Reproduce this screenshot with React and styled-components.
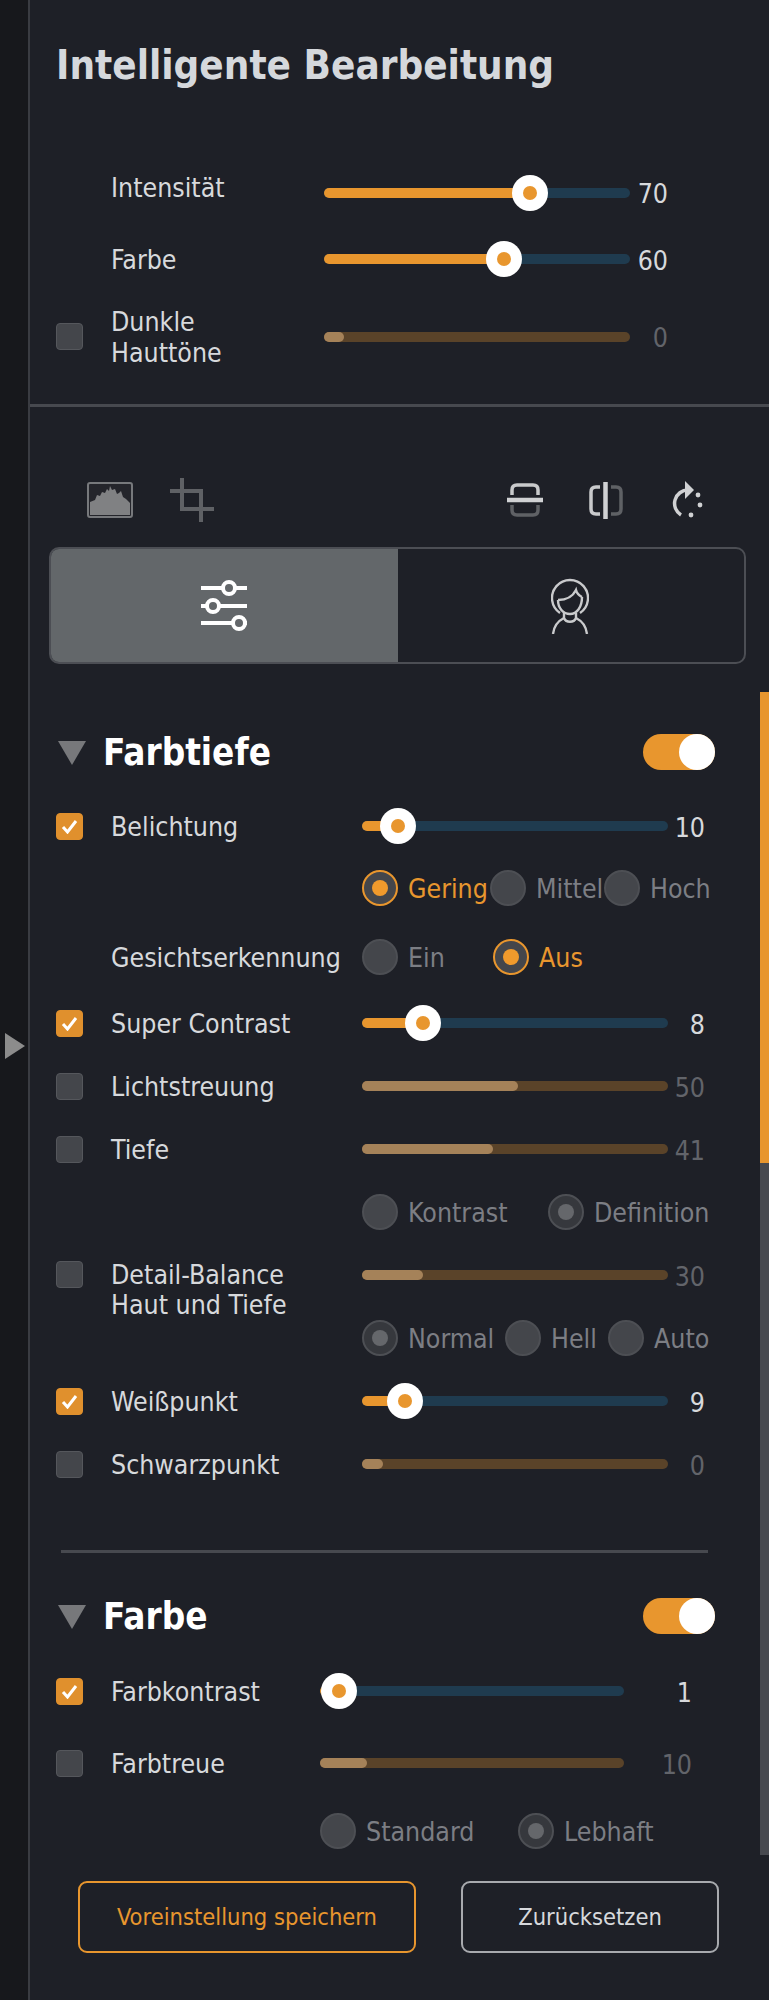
import React from "react"
import styled, { createGlobalStyle } from "styled-components"

const GlobalStyle = createGlobalStyle`
  html, body {
    margin: 0;
    padding: 0;
    background: #1e2027;
  }
  * {
    box-sizing: border-box;
  }
`

const Page = styled.div`
  display: flex;
  width: 769px;
  height: 2000px;
  background: #1e2027;
  color: #d7d9dc;
  font-family: "DejaVu Sans Condensed", "DejaVu Sans", sans-serif;
  overflow: hidden;
`

const SideStrip = styled.div`
  flex: 0 0 30px;
  padding: 1033px 0 0 5px;
  background: #17181c;
  border-right: 2px solid #3a3c42;
`

const ExpandArrow = styled.div`
  width: 0;
  height: 0;
  border-left: 20px solid #8c8c8c;
  border-top: 13px solid transparent;
  border-bottom: 13px solid transparent;
`

const Panel = styled.div`
  flex: 1;
  min-width: 0;
  display: flex;
  flex-direction: column;
`

const Title = styled.h1`
  margin: 0;
  padding: 45px 0 0 26px;
  font-size: 40px;
  line-height: 40px;
  font-weight: 700;
  color: #d5d8dc;
  white-space: nowrap;
`

const PanelRule = styled.div`
  height: 3px;
  margin-top: 37px;
  background: #47494f;
`

const Toolbar = styled.div`
  display: flex;
  align-items: center;
  height: 44px;
  margin: 71px 66px 0 57px;
`

const ToolIcon = styled.svg`
  display: block;
  flex: none;
  margin-left: ${({ $gap }) => $gap || 0}px;
`

const TabBar = styled.div`
  display: flex;
  width: 697px;
  height: 117px;
  margin: 25px 0 0 19px;
  border: 2px solid #4c4e54;
  border-radius: 10px;
  overflow: hidden;
`

const Tab = styled.div`
  display: flex;
  align-items: center;
  justify-content: center;
  flex: 0 0 ${({ $w }) => $w}px;
  padding-right: 2px;
  background: ${({ $active }) => ($active ? "#63676a" : "transparent")};
`

const ScrollArea = styled.div`
  display: flex;
  height: 1163px;
  margin-top: 28px;
`

const ScrollContent = styled.div`
  flex: 1;
  min-width: 0;
`

const ScrollTrack = styled.div`
  flex: 0 0 9px;
  height: 100%;
  background: #47494f;
`

const ScrollThumb = styled.div`
  height: 471px;
  background: #e8962e;
`

const SectionHeader = styled.div`
  display: flex;
  align-items: center;
  height: 37px;
  margin-top: ${({ $top }) => $top}px;
  padding: 0 45px 0 28px;
`

const Triangle = styled.div`
  width: 0;
  height: 0;
  margin-top: 3px;
  border-top: 24px solid #77787b;
  border-left: 14px solid transparent;
  border-right: 14px solid transparent;
`

const SectionTitle = styled.h2`
  flex: 1;
  margin: 2px 0 0 17px;
  font-size: 36.5px;
  font-weight: 700;
  color: #fff;
`

const Toggle = styled.div`
  position: relative;
  width: 72px;
  height: 36px;
  border-radius: 18px;
  background: #e8962e;
`

const ToggleKnob = styled.div`
  position: absolute;
  top: 0;
  right: 0;
  width: 36px;
  height: 36px;
  border-radius: 50%;
  background: #fff;
`

const Row = styled.div`
  display: grid;
  grid-template-columns: 55px ${({ $label }) => $label}px ${({ $track }) => $track}px ${({ $val }) => $val}px;
  align-items: ${({ $tall }) => ($tall ? "start" : "center")};
  height: ${({ $h }) => $h || 40}px;
  margin-top: ${({ $top }) => $top}px;
  padding-left: 26px;
`

const CheckBox = styled.div`
  display: flex;
  align-items: center;
  justify-content: center;
  width: 27px;
  height: 27px;
  margin-top: ${({ $tall }) => ($tall ? 6 : 0)}px;
  border-radius: 4px;
  background: ${({ $on }) => ($on ? "#e0902d" : "#44464b")};
  border: 1px solid ${({ $on }) => ($on ? "#e0902d" : "#55575c")};
`

const Label = styled.div`
  font-size: 26.5px;
  line-height: ${({ $lh }) => $lh || 31}px;
  color: #d7d9dc;
  white-space: nowrap;
  padding-top: ${({ $pt }) => $pt || 0}px;
  padding-bottom: ${({ $pb }) => $pb || 0}px;
`

const Track = styled.div`
  position: relative;
  height: 10px;
  margin-top: ${({ $tall }) => ($tall ? 15 : 0)}px;
  border-radius: 5px;
  background: ${({ $on }) => ($on ? "#1f3b4f" : "#5a4329")};
`

const Fill = styled.div`
  height: 100%;
  border-radius: 5px;
  background: ${({ $on }) => ($on ? "#e8962e" : "#a58259")};
`

const Thumb = styled.div`
  position: absolute;
  top: -13px;
  display: flex;
  align-items: center;
  justify-content: center;
  width: 36px;
  height: 36px;
  margin-left: -18px;
  border-radius: 50%;
  background: #fff;

  &::after {
    content: "";
    width: 14px;
    height: 14px;
    border-radius: 50%;
    background: #e8962e;
  }
`

const Value = styled.div`
  font-size: 26.5px;
  line-height: 31px;
  text-align: right;
  margin-top: ${({ $tall }) => ($tall ? 6 : 2)}px;
  color: ${({ $on }) => ($on ? "#d7d9dc" : "#62646a")};
`

const RadioRow = styled.div`
  display: flex;
  align-items: center;
  height: ${({ $h }) => $h || 40}px;
  margin-top: ${({ $top }) => $top || 0}px;
  padding-left: ${({ $left }) => $left}px;
`

const RowLabel = styled(Label)`
  flex: 0 0 251px;
`

const RadioOption = styled.div`
  display: flex;
  align-items: center;
  flex: 0 0 ${({ $w }) => ($w ? `${$w}px` : "auto")};
  gap: 10px;
`

const RadioDot = styled.div`
  display: flex;
  align-items: center;
  justify-content: center;
  flex: none;
  width: 36px;
  height: 36px;
  border-radius: 50%;
  background: ${({ $state }) => ($state === "muted" ? "#36383d" : "#44464b")};
  border: 2px solid
    ${({ $state }) => ($state === "on" ? "#e8962e" : "#4d4f54")};

  &::after {
    content: "";
    display: ${({ $state }) => ($state ? "block" : "none")};
    width: 16px;
    height: 16px;
    border-radius: 50%;
    background: ${({ $state }) => ($state === "on" ? "#f09a2c" : "#65676b")};
  }
`

const RadioText = styled.span`
  font-size: 26.5px;
  line-height: 31px;
  white-space: nowrap;
  color: ${({ $on }) => ($on ? "#e8962e" : "#7c7e84")};
`

const SectionRule = styled.div`
  height: 3px;
  margin: 66px 52px 0 31px;
  background: #47494f;
`

const Footer = styled.div`
  display: flex;
  gap: 45px;
  margin: 26px 0 0 48px;
`

const FooterButton = styled.div`
  display: flex;
  align-items: center;
  justify-content: center;
  width: ${({ $w }) => $w}px;
  height: 72px;
  border-radius: 9px;
  border: 2px solid ${({ $primary }) => ($primary ? "#e8962e" : "#a8aaae")};
  color: ${({ $primary }) => ($primary ? "#e8962e" : "#d7d9dc")};
  font-size: 23.5px;
  white-space: nowrap;
`

const CheckMark = () => (
  <svg width="17" height="15" viewBox="0 0 17 15" fill="none">
    <path d="M2 8 L6.5 13 L15 2" stroke="#fff" strokeWidth="3" />
  </svg>
)

const HistogramIcon = () => (
  <ToolIcon width="46" height="36" viewBox="0 0 46 36">
    <rect x="1" y="1" width="44" height="34" rx="2" fill="#24252b" stroke="#77797c" strokeWidth="2" />
    <path
      d="M3 20 L8 18 L10 13 L13 14 L15 10 L18 11 L20 7 L22 9 L23 4 L25 8 L28 7 L30 12 L32 11 L34 9 L36 15 L39 17 L43 21 L43 33 L3 33 Z"
      fill="#808183"
    />
  </ToolIcon>
)

const CropIcon = () => (
  <ToolIcon $gap={37} width="44" height="44" viewBox="0 0 44 44" fill="none" stroke="#5f6165" strokeWidth="4">
    <path d="M12 0 V31 H44" />
    <path d="M0 13 H31 V44" />
  </ToolIcon>
)

const FlipVerticalIcon = () => (
  <ToolIcon $gap={293} width="36" height="36" viewBox="0 0 36 36" fill="none" strokeWidth="3.5">
    <path d="M5 13 V8 Q5 3 10 3 H26 Q31 3 31 8 V13" stroke="#c9cacc" />
    <path d="M5 23 V28 Q5 33 10 33 H26 Q31 33 31 28 V23" stroke="#5f6165" />
    <path d="M0 18 H36" stroke="#d0d1d3" strokeWidth="4.5" />
  </ToolIcon>
)

const FlipHorizontalIcon = () => (
  <ToolIcon $gap={45} width="36" height="37" viewBox="0 0 36 37" fill="none" strokeWidth="3.5">
    <path d="M12 5 H8 Q3 5 3 10 V27 Q3 32 8 32 H12" stroke="#c9cacc" />
    <path d="M23 5 H28 Q33 5 33 10 V27 Q33 32 28 32 H23" stroke="#5f6165" />
    <path d="M17.5 0 V37" stroke="#d0d1d3" strokeWidth="4.5" />
  </ToolIcon>
)

const RotateIcon = () => (
  <ToolIcon $gap={47} width="33" height="38" viewBox="0 0 33 38">
    <path d="M17 9 A13.5 13.5 0 0 0 10 34" fill="none" stroke="#d0d1d3" strokeWidth="3.5" />
    <path d="M14 0 L23 9 L14 18 Z" fill="#d0d1d3" />
    <circle cx="27" cy="14" r="2.4" fill="#d0d1d3" />
    <circle cx="29" cy="24" r="2.4" fill="#d0d1d3" />
    <circle cx="20" cy="34" r="2.4" fill="#d0d1d3" />
  </ToolIcon>
)

const SlidersIcon = () => (
  <svg width="46" height="52" viewBox="0 0 46 52" fill="none" stroke="#fff" strokeWidth="4">
    <path d="M0 8 H46 M0 26 H46 M0 43 H46" />
    <circle cx="28" cy="8" r="6" fill="#63676a" />
    <circle cx="12" cy="26" r="6" fill="#63676a" />
    <circle cx="38" cy="43" r="6" fill="#63676a" />
  </svg>
)

const PersonIcon = () => (
  <svg width="38" height="56" viewBox="0 0 38 56" fill="none" stroke="#c9cacc" strokeWidth="2.4">
    <path d="M9 35 A18 18 0 1 1 29 35" />
    <path d="M7 22 C13 22 21 20 25 12 C26 16 29 18 31 19" />
    <path d="M7 22 C7 30 12 36 19 36 C26 36 31 29 31 19" />
    <path d="M13 35 V40 C15 45 23 45 25 40 V35" />
    <path d="M2 56 C3 47 7 43 13 40 M36 56 C35 47 31 43 25 40" />
  </svg>
)

function SliderRow({ label, value, on, check, pos, tall, top, h, cols, lines, raise }) {
  return (
    <Row $label={cols[0]} $track={cols[1]} $val={cols[2]} $top={top} $h={h} $tall={tall}>
      {check ? (
        <CheckBox $on={on} $tall={tall}>
          {on && <CheckMark />}
        </CheckBox>
      ) : (
        <span />
      )}
      <Label $lh={tall ? 30 : undefined} $pt={tall ? 5 : lines ? 1 : 0} $pb={raise}>
        {lines
          ? lines.map(line => <div key={line}>{line}</div>)
          : label}
      </Label>
      <Track $on={on} $tall={tall}>
        <Fill $on={on} style={{ width: pos }} />
        {on && <Thumb style={{ left: pos }} />}
      </Track>
      <Value $on={on} $tall={tall}>
        {value}
      </Value>
    </Row>
  )
}

function Radio({ text, state, w }) {
  return (
    <RadioOption $w={w}>
      <RadioDot $state={state} />
      <RadioText $on={state === "on"}>{text}</RadioText>
    </RadioOption>
  )
}

const TOP_COLS = [213, 306, 38]
const MAIN_COLS = [251, 306, 37]
const COLOR_COLS = [209, 304, 68]

export default function App() {
  return (
    <Page>
      <GlobalStyle />
      <SideStrip>
        <ExpandArrow />
      </SideStrip>
      <Panel>
        <Title>Intelligente Bearbeitung</Title>
        <SliderRow cols={TOP_COLS} top={87} label="Intensität" value="70" on pos={206} raise={10} />
        <SliderRow cols={TOP_COLS} top={27} label="Farbe" value="60" on pos={180} />
        <SliderRow
          cols={TOP_COLS}
          top={26}
          h={62}
          check
          lines={["Dunkle", "Hauttöne"]}
          value="0"
          pos={20}
        />
        <PanelRule />

        <Toolbar>
          <HistogramIcon />
          <CropIcon />
          <FlipVerticalIcon />
          <FlipHorizontalIcon />
          <RotateIcon />
        </Toolbar>

        <TabBar>
          <Tab $w={347} $active>
            <SlidersIcon />
          </Tab>
          <Tab $w={346}>
            <PersonIcon />
          </Tab>
        </TabBar>

        <ScrollArea>
          <ScrollContent>
            <SectionHeader $top={41}>
              <Triangle />
              <SectionTitle>Farbtiefe</SectionTitle>
              <Toggle>
                <ToggleKnob />
              </Toggle>
            </SectionHeader>

            <SliderRow cols={MAIN_COLS} top={36} check on label="Belichtung" value="10" pos={36} />
            <RadioRow $top={22} $left={332}>
              <Radio text="Gering" state="on" w={128} />
              <Radio text="Mittel" w={114} />
              <Radio text="Hoch" />
            </RadioRow>
            <RadioRow $top={29} $left={81}>
              <RowLabel>Gesichtserkennung</RowLabel>
              <Radio text="Ein" w={131} />
              <Radio text="Aus" state="on" />
            </RadioRow>
            <SliderRow cols={MAIN_COLS} top={26} check on label="Super Contrast" value="8" pos={61} />
            <SliderRow cols={MAIN_COLS} top={23} check label="Lichtstreuung" value="50" pos={156} />
            <SliderRow cols={MAIN_COLS} top={23} check label="Tiefe" value="41" pos={131} />
            <RadioRow $top={23} $left={332}>
              <Radio text="Kontrast" w={186} />
              <Radio text="Definition" state="muted" />
            </RadioRow>
            <SliderRow
              cols={MAIN_COLS}
              top={23}
              h={63}
              tall
              check
              lines={["Detail-Balance", "Haut und Tiefe"]}
              value="30"
              pos={61}
            />
            <RadioRow $left={332}>
              <Radio text="Normal" state="muted" w={143} />
              <Radio text="Hell" w={103} />
              <Radio text="Auto" />
            </RadioRow>
            <SliderRow cols={MAIN_COLS} top={23} check on label="Weißpunkt" value="9" pos={43} />
            <SliderRow cols={MAIN_COLS} top={23} check label="Schwarzpunkt" value="0" pos={21} />

            <SectionRule />

            <SectionHeader $top={44}>
              <Triangle />
              <SectionTitle>Farbe</SectionTitle>
              <Toggle>
                <ToggleKnob />
              </Toggle>
            </SectionHeader>

            <SliderRow cols={COLOR_COLS} top={37} check on label="Farbkontrast" value="1" pos={19} />
            <SliderRow cols={COLOR_COLS} top={32} check label="Farbtreue" value="10" pos={47} />
            <RadioRow $top={28} $left={290}>
              <Radio text="Standard" w={198} />
              <Radio text="Lebhaft" state="muted" />
            </RadioRow>
          </ScrollContent>
          <ScrollTrack>
            <ScrollThumb />
          </ScrollTrack>
        </ScrollArea>

        <Footer>
          <FooterButton $primary $w={338}>
            Voreinstellung speichern
          </FooterButton>
          <FooterButton $w={258}>Zurücksetzen</FooterButton>
        </Footer>
      </Panel>
    </Page>
  )
}
